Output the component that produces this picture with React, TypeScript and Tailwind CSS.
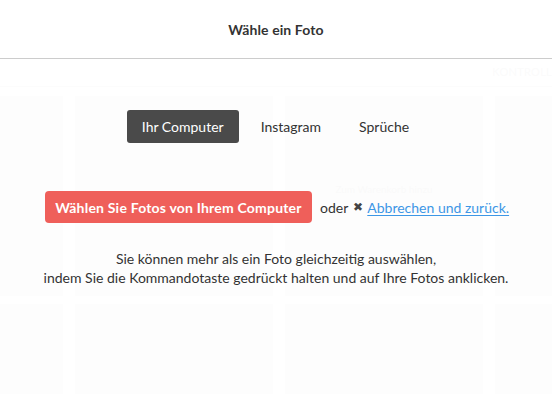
import React from 'react';

const tabs = ['Ihr Computer', 'Instagram', 'Sprüche'];

export default function App() {
  return (
    <div className="relative w-[552px] h-[394px] overflow-hidden bg-white text-[#333]" style={{ fontFamily: 'Lato, "Open Sans", sans-serif' }}>
      {/* Modal header */}
      <div className="h-[59px] flex items-center justify-center border-b border-[#cccccc] bg-white">
        <h1 className="text-[14px] font-bold text-[#333] tracking-[0.1px]">Wähle ein Foto</h1>
      </div>

      <div className="relative h-[335px]">
        {/* Faded page behind the overlay */}
        <div className="flex flex-col">
          <div className="h-[28px] border-b border-[#f8f8f8] flex items-center justify-end">
            <span className="text-[11px] text-[#f4f4f4] tracking-wide">KONTROLL</span>
          </div>
          <div className="pt-[9px] grid grid-cols-[63px_198px_198px_57px] gap-x-[12px] gap-y-[8px]">
            <div className="h-[200px] bg-[#fafafa]" />
            <div className="h-[200px] bg-[#fafafa]" />
            <div className="h-[200px] bg-[#fafafa] flex justify-center pt-[86px]">
              <span className="text-[10px] text-[#f1f1f1]">Zum Warenkorb hinzu</span>
            </div>
            <div className="h-[200px] bg-[#fafafa]" />
            <div className="h-[100px] bg-[#fafafa]" />
            <div className="h-[100px] bg-[#fafafa]" />
            <div className="h-[100px] bg-[#fafafa]" />
            <div className="h-[100px] bg-[#fafafa]" />
          </div>
        </div>

        {/* Overlay content */}
        <div className="absolute inset-0 bg-white/60 flex flex-col items-center pt-[51px]">
          <div className="flex items-center gap-[22px]">
            {tabs.map((t, i) => (
              <button
                key={t}
                className={
                  i === 0
                    ? 'h-[33px] px-[15px] rounded-[3px] bg-[#4a4a4a] text-white text-[14px]'
                    : 'h-[33px] text-[14px] text-[#333] mr-[16px]'
                }
              >
                {t}
              </button>
            ))}
          </div>

          <div className="mt-[48px] flex items-center self-start ml-[45px]">
            <button className="h-[32px] w-[267px] rounded-[4px] bg-[#ef5f5a] text-white text-[14px] font-bold tracking-[0.2px]">
              Wählen Sie Fotos von Ihrem Computer
            </button>
            <span className="ml-[8px] text-[14px] text-[#333]">oder</span>
            <span className="ml-[5px] text-[12px] text-[#444]">✖</span>
            <a href="#" className="ml-[4px] text-[14px] text-[#3d97e6] underline underline-offset-2">
              Abbrechen und zurück.
            </a>
          </div>

          <p className="mt-[26px] text-center text-[14px] leading-[19px] text-[#333]">
            Sie können mehr als ein Foto gleichzeitig auswählen,
            <br />
            indem Sie die Kommandotaste gedrückt halten und auf Ihre Fotos anklicken.
          </p>
        </div>
      </div>
    </div>
  );
}
